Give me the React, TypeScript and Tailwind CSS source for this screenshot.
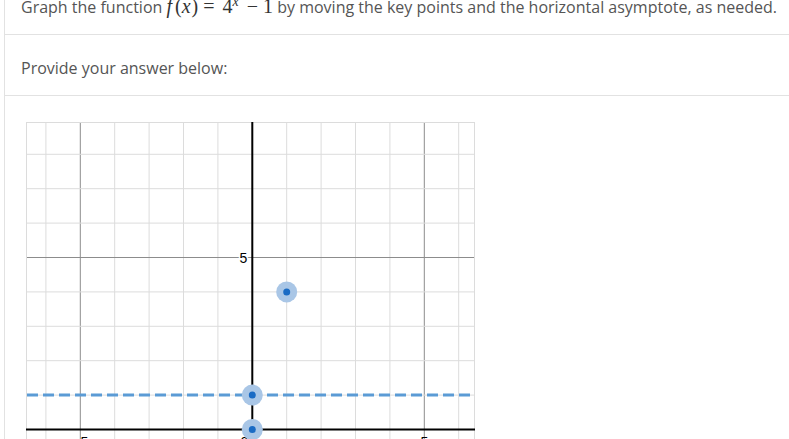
import React from "react";

const OX = 226.3;
const OY = 307.5;
const U = 34.4;
const W = 449;
const H = 449;

function Graph() {
  const verts = [] as React.ReactNode[];
  for (let k = -6; k <= 6; k++) {
    const x = OX + U * k;
    const major = k === 5 || k === -5;
    if (k === 0) continue;
    verts.push(
      <line key={"v" + k} x1={x} y1={0} x2={x} y2={H} stroke={major ? "#8c8c8c" : "#dcdcdc"} strokeWidth={1} />
    );
  }
  const hors = [] as React.ReactNode[];
  for (let k = -4; k <= 8; k++) {
    const y = OY - U * k;
    if (k === 0) continue;
    const major = k === 5;
    hors.push(
      <line key={"h" + k} x1={0} y1={y} x2={W} y2={y} stroke={major ? "#8c8c8c" : "#dcdcdc"} strokeWidth={1} />
    );
  }
  const pts: [number, number][] = [
    [1, 4],
    [0, 1],
    [0, 0],
  ];
  const lbl = "'Liberation Sans', Arial, sans-serif";
  return (
    <svg width={W} height={H} viewBox={`0 0 ${W} ${H}`} className="block">
      <rect x={0} y={0} width={W} height={H} fill="#ffffff" />
      {verts}
      {hors}
      <line x1={0.5} y1={0} x2={0.5} y2={H} stroke="#dcdcdc" />
      <line x1={W - 0.5} y1={0} x2={W - 0.5} y2={H} stroke="#dcdcdc" />
      <line x1={0} y1={0.5} x2={W} y2={0.5} stroke="#dcdcdc" />
      <line x1={OX} y1={0} x2={OX} y2={H} stroke="#000" strokeWidth={2} />
      <line x1={0} y1={OY} x2={W} y2={OY} stroke="#000" strokeWidth={2} />
      <text
        x={OX - 5}
        y={OY - 5 * U + 5}
        textAnchor="end"
        fontFamily={lbl}
        fontSize={14}
        fill="#000"
        stroke="#fff"
        strokeWidth={3}
        paintOrder="stroke"
      >
        5
      </text>
      <text x={OX - 5 * U} y={OY + 17} textAnchor="middle" fontFamily={lbl} fontSize={14} fill="#000">
        −5
      </text>
      <text x={OX - 4} y={OY + 17} textAnchor="end" fontFamily={lbl} fontSize={14} fill="#000">
        0
      </text>
      <text x={OX + 5 * U} y={OY + 17} textAnchor="middle" fontFamily={lbl} fontSize={14} fill="#000">
        5
      </text>
      <line x1={1} y1={OY - U} x2={W - 4} y2={OY - U} stroke="#5b9bd5" strokeWidth={3} strokeDasharray="11 5" />
      {pts.map(([a, b], i) => (
        <g key={i}>
          <circle cx={OX + U * a} cy={OY - U * b} r={10.5} fill="#a9c6e6" />
          <circle cx={OX + U * a} cy={OY - U * b} r={3.5} fill="#1a6bc4" />
        </g>
      ))}
    </svg>
  );
}

export default function App() {
  return (
    <div className="w-[789px] h-[439px] overflow-hidden bg-white" style={{ fontFamily: "'Open Sans', 'Noto Sans', sans-serif" }}>
      <div className="ml-[4px] h-[439px] border-l border-[#e2e2e2]">
        <div className="h-[35px] border-b border-[#e2e2e2] pl-[16px] overflow-hidden">
          <div className="mt-[-5px] text-[16px] leading-[24px] text-[#555555] whitespace-nowrap">
            Graph the function{" "}
            <span className="text-[20px] leading-[0px] text-[#333]" style={{ fontFamily: "'Liberation Serif', 'Times New Roman', serif" }}>
              <i className="inline-block">f</i>
              <span className="inline-block ml-[3px]">(</span>
              <i className="inline-block">x</i>
              <span className="inline-block ml-[1px]">)</span>
              <span className="inline-block ml-[5px] mr-[8px]">=</span>
              <span className="inline-block">4</span>
              <sup className="text-[14px] leading-[0px] italic">x</sup>
              <span className="inline-block ml-[8px] mr-[5px]">−</span>
              <span className="inline-block">1</span>
            </span>{" "}
            by moving the key points and the horizontal asymptote, as needed.
          </div>
        </div>
        <div className="h-[61px] border-b border-[#e2e2e2] pl-[16px] pt-[21px]">
          <div className="text-[16px] leading-[24px] text-[#555555]">Provide your answer below:</div>
        </div>
        <div className="pl-[21px] pt-[26px]">
          <Graph />
        </div>
      </div>
    </div>
  );
}
